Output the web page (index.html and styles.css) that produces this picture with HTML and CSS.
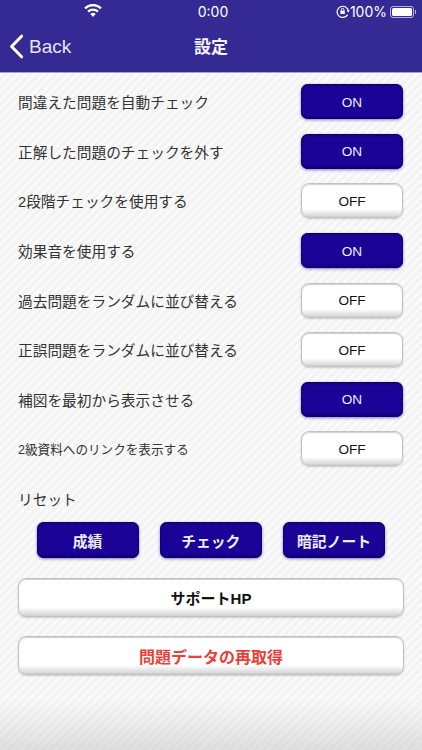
FILE: index.html
```html
<!DOCTYPE html>
<html lang="ja">
<head>
<meta charset="utf-8">
<title>設定</title>
<link rel="stylesheet" href="styles.css">
</head>
<body>
<div class="screen">
  <header class="header">
    <div class="status">
      <svg class="wifi" width="18" height="13" viewBox="0 0 18 13"><path d="M9 13 6.3 10a3.8 3.8 0 0 1 5.4 0zM4.8 8.4 3.3 6.8a8 8 0 0 1 11.4 0l-1.5 1.6a5.9 5.9 0 0 0-8.4 0zM1.8 5.2.2 3.5a12.4 12.4 0 0 1 17.6 0l-1.6 1.7a10.2 10.2 0 0 0-14.4 0z" fill="#fff"/></svg>
      <span class="time">0:00</span>
      <span class="battery-group">
        <svg class="lock" width="14" height="13" viewBox="0 0 14 13"><path d="M11.6 9.6A5.6 5.6 0 1 1 12.3 6.5" fill="none" stroke="#fff" stroke-width="1.2"/><path d="M10.8 5.6h3l-1.5 2z" fill="#fff"/><rect x="4.4" y="5.6" width="4.4" height="3.4" rx=".5" fill="#fff"/><path d="M5.3 5.6V4.6a1.3 1.3 0 0 1 2.6 0v1" fill="none" stroke="#fff"/></svg>
        <span class="pct">100%</span>
        <span class="battery"><span class="battery-fill"></span></span>
        <span class="battery-tip"></span>
      </span>
    </div>
    <nav class="nav">
      <span class="back">
        <svg width="15" height="25" viewBox="0 0 15 25"><path d="M12.6 2.2 2.6 12.5l10 10.3" fill="none" stroke="#fff" stroke-width="3" stroke-linecap="round" stroke-linejoin="round"/></svg>
        <span>Back</span>
      </span>
      <h1 class="title">設定</h1>
    </nav>
  </header>
  <main class="content">
    <section class="rows">
      <div class="row"><span>間違えた問題を自動チェック</span><button class="btn toggle on">ON</button></div>
      <div class="row"><span>正解した問題のチェックを外す</span><button class="btn toggle on">ON</button></div>
      <div class="row"><span>2段階チェックを使用する</span><button class="btn toggle off">OFF</button></div>
      <div class="row"><span>効果音を使用する</span><button class="btn toggle on">ON</button></div>
      <div class="row"><span>過去問題をランダムに並び替える</span><button class="btn toggle off">OFF</button></div>
      <div class="row"><span>正誤問題をランダムに並び替える</span><button class="btn toggle off">OFF</button></div>
      <div class="row"><span>補図を最初から表示させる</span><button class="btn toggle on">ON</button></div>
      <div class="row"><span class="small">2級資料へのリンクを表示する</span><button class="btn toggle off">OFF</button></div>
    </section>
    <p class="reset-label">リセット</p>
    <div class="reset-buttons">
      <button class="btn reset on">成績</button>
      <button class="btn reset on">チェック</button>
      <button class="btn reset on">暗記ノート</button>
    </div>
    <button class="btn wide off support">サポートHP</button>
    <button class="btn wide off refetch">問題データの再取得</button>
  </main>
</div>
</body>
</html>
```
FILE: styles.css
```css
* { box-sizing: border-box; }
html, body { margin: 0; padding: 0; }
body {
  font-family: "Liberation Sans", "Noto Sans CJK JP", sans-serif;
  color: #333;
}
.screen {
  width: 422px;
  height: 750px;
  overflow: hidden;
  display: flex;
  flex-direction: column;
}
.header {
  height: 73px;
  flex: none;
  background: #352993;
  border-bottom: 1px solid #a9a6c8;
  color: #fff;
}
.status {
  height: 23px;
  position: relative;
  display: flex;
  justify-content: center;
  align-items: center;
  padding-left: 4px;
  font-family: Inter, "Liberation Sans", sans-serif;
  font-size: 14px;
}
.wifi { position: absolute; left: 84px; top: 4px; }
.battery-group {
  position: absolute;
  right: 6px;
  top: 5px;
  display: flex;
  align-items: center;
  height: 13px;
}
.pct { margin-right: 3px; }
.battery {
  width: 24px;
  height: 12px;
  border: 1px solid #b6b2d8;
  border-radius: 3px;
  padding: 1px;
  display: flex;
}
.battery-fill { flex: 1; background: #fff; border-radius: 1.5px; }
.battery-tip { width: 1px; height: 4px; background: #b6b2d8; margin-left: 1px; }
.nav {
  height: 49px;
  position: relative;
  display: flex;
  justify-content: center;
  align-items: center;
}
.back {
  position: absolute;
  left: 9px;
  top: 11px;
  display: flex;
  align-items: center;
  gap: 5px;
  font-size: 19px;
  color: #e6e4f4;
  line-height: 25px;
}
.title {
  margin: 0;
  font-size: 17px;
  font-weight: 700;
  line-height: 1;
  color: #f4f3fb;
}
.content {
  flex: 1;
  padding: 4px 19px 0 18px;
  background:
    linear-gradient(to bottom, rgba(205,205,205,0) 0, rgba(205,205,205,0) 625px, rgba(205,205,205,.6) 677px),
    repeating-linear-gradient(135deg, #fafafa 0, #fafafa 3px, #f3f3f3 3px, #f3f3f3 6px);
}
.rows { display: grid; grid-auto-rows: 49.6px; }
.row {
  display: flex;
  justify-content: space-between;
  align-items: center;
  font-size: 14.7px;
}
.small { font-size: 12.6px; }
.btn {
  display: block;
  font-family: "Liberation Sans", "Noto Sans CJK JP", sans-serif;
  padding: 1px 0 0;
  cursor: pointer;
}
.on {
  border: 0;
  border-radius: 7px;
  background: #1a0396;
  color: #eeeef8;
  box-shadow: inset 0 1px 2px #0c0250, inset 0 -2px 2px #0f0270, 0 1px 3px rgba(40,30,140,.55);
}
.off {
  border: 1px solid #c2c2c2;
  border-radius: 8px;
  background: linear-gradient(to bottom, #fff 0, #fff 76%, #dcdcdc 95%, #cfcfcf 100%);
  color: #111;
  box-shadow: inset 0 1px 1px #cfcfcf, 0 1px 2px rgba(0,0,0,.18);
}
.toggle { width: 102px; height: 35px; font-size: 13.6px; }
.reset-label { margin: 16px 0 0; height: 20px; line-height: 20px; font-size: 14.7px; }
.reset-buttons {
  display: flex;
  justify-content: space-between;
  padding: 0 18px 0 18.5px;
  margin-top: 12px;
}
.reset { width: 102px; height: 36px; font-size: 14.8px; font-weight: 700; }
.wide { width: 386px; height: 39px; font-weight: 700; }
.support { margin-top: 20px; font-size: 15px; }
.refetch { margin-top: 19px; color: #e8403a; font-size: 16px; }
```
